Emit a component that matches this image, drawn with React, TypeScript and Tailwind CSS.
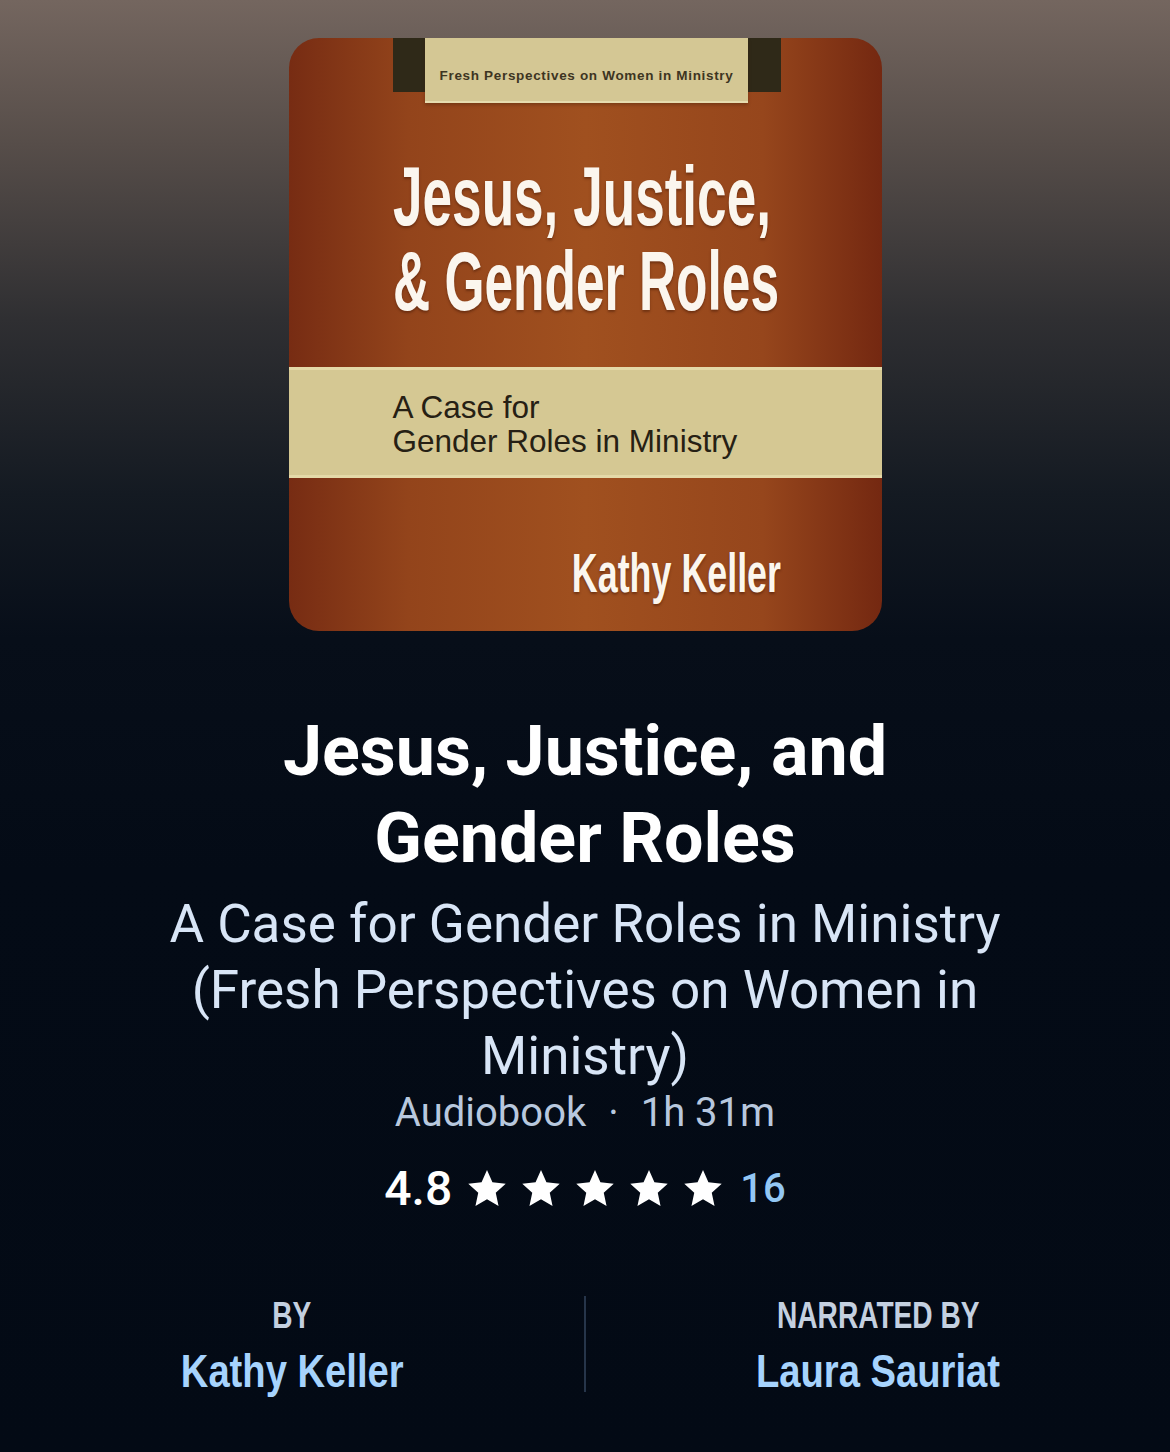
import { Fragment } from "react";

const STARS = [0, 1, 2, 3, 4];

function StarIcon() {
  return (
    <svg viewBox="0 0 24 24" className="h-[42px] w-[42px] shrink-0 fill-white">
      <polygon points="12,1.2 15.1,8.2 22.7,9 17,14.2 18.6,21.7 12,17.8 5.4,21.7 7,14.2 1.3,9 8.9,8.2" />
    </svg>
  );
}

function Cover() {
  return (
    <div className="mx-auto h-[593px] w-[593px] overflow-hidden rounded-[30px] bg-[linear-gradient(90deg,#772c13_0%,#93441b_20%,#a0501f_50%,#96461c_80%,#742811_100%)] font-['Liberation_Sans',sans-serif]">
      {/* series tab */}
      <div className="ml-[104px] flex h-[54px] w-[388px] justify-center bg-[#2f2918]">
        <div className="flex h-[65px] w-[323px] shrink-0 items-end justify-center border-b-2 border-[#e6dcaf] bg-[#d4c794] pb-[15px] shadow-[0_2px_3px_rgba(60,30,10,0.35)]">
          <span className="text-[13.5px] font-bold tracking-[0.05em] text-[#3d3522]">
            Fresh Perspectives on Women in Ministry
          </span>
        </div>
      </div>

      {/* cover title */}
      <div className="ml-[104px] mt-[62px] text-[83px] font-bold leading-[85px] text-[#fbf6ee] [text-shadow:0_2px_3px_rgba(60,20,5,0.45)]">
        <div className="origin-left scale-x-[0.64] whitespace-nowrap">Jesus, Justice,</div>
        <div className="origin-left scale-x-[0.62] whitespace-nowrap">&amp; Gender Roles</div>
      </div>

      {/* subtitle band */}
      <div className="mt-[43px] h-[111px] border-y-[3px] border-[#e4d9a8] bg-[#d5c893] pl-[104px] pt-[20px] text-[31.5px] leading-[34px] text-[#262014]">
        <div>A Case for</div>
        <div>Gender Roles in Ministry</div>
      </div>

      {/* author */}
      <div className="mr-[101px] mt-[65px] text-right text-[56px] font-bold leading-[60px] text-[#fbf6ee] [text-shadow:0_2px_3px_rgba(60,20,5,0.45)]">
        <div className="origin-right scale-x-[0.64] whitespace-nowrap">Kathy Keller</div>
      </div>
    </div>
  );
}

export default function App() {
  return (
    <div className="min-h-[1452px] w-full bg-[linear-gradient(180deg,#74665f_0%,#564d49_10%,#2f2f32_22%,#141a22_34%,#070e19_44%,#040b16_60%,#030a15_100%)] pb-10 pt-[38px] font-['Roboto',sans-serif]">
      <Cover />

      <h1 className="mx-auto mt-[77px] w-[900px] text-center text-[70px] font-bold leading-[87px] text-white">
        Jesus, Justice, and
        <br />
        Gender Roles
      </h1>

      <p className="mx-auto mt-[9px] w-[880px] text-center text-[53px] leading-[66px] text-[#d8e5f6]">
        A Case for Gender Roles in Ministry (Fresh Perspectives on Women in Ministry)
      </p>

      <div className="flex items-center justify-center text-[40px] leading-[48px] text-[#b8c8de]">
        <span>Audiobook</span>
        <span className="mx-[22px]">·</span>
        <span>1h 31m</span>
      </div>

      {/* rating */}
      <div className="mt-[28px] flex items-center justify-center">
        <span className="mr-[14px] text-[48px] font-medium leading-none text-white">4.8</span>
        <div className="flex items-center gap-[12px]">
          {STARS.map((s) => (
            <Fragment key={s}>
              <StarIcon />
            </Fragment>
          ))}
        </div>
        <span className="ml-[16px] text-[40px] font-medium leading-none text-[#93c7f4]">16</span>
      </div>

      {/* credits */}
      <div className="mt-[83px] grid grid-cols-[1fr_2px_1fr] font-['Liberation_Sans',sans-serif] font-bold">
        <div className="flex flex-col items-center">
          <span className="scale-x-[0.76] whitespace-nowrap text-[37px] leading-[40px] text-[#c4d0e0]">BY</span>
          <span className="mt-[10px] scale-x-[0.83] whitespace-nowrap text-[46px] leading-[50px] text-[#a6d3fd]">
            Kathy Keller
          </span>
        </div>
        <div className="h-[96px] bg-[#26354a]" />
        <div className="flex flex-col items-center">
          <span className="scale-x-[0.76] whitespace-nowrap text-[37px] leading-[40px] text-[#c4d0e0]">NARRATED BY</span>
          <span className="mt-[10px] scale-x-[0.83] whitespace-nowrap text-[46px] leading-[50px] text-[#a6d3fd]">
            Laura Sauriat
          </span>
        </div>
      </div>
    </div>
  );
}
